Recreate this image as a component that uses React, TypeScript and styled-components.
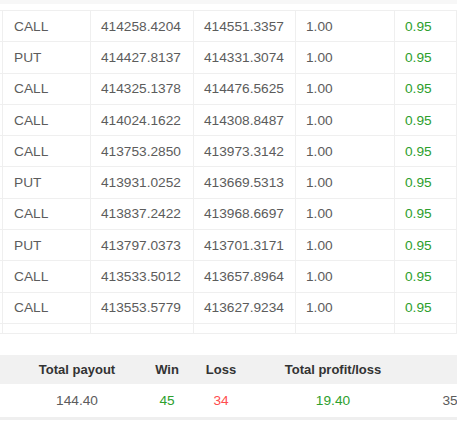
import React from "react";
import styled, { createGlobalStyle } from "styled-components";

const Global = createGlobalStyle`
  html, body { margin: 0; padding: 0; background: #fff; }
  body { overflow: hidden; width: 457px; height: 422px; font-family: "Liberation Sans", Arial, sans-serif; }
`;

const Page = styled.div`
  width: 457px;
  height: 422px;
  overflow: hidden;
  display: flex;
  flex-direction: column;
`;

const TopStrip = styled.div`
  height: 4px;
  background: #f7f7f7;
  margin-bottom: 6px;
  flex-shrink: 0;
`;

const Table = styled.div`
  display: flex;
  flex-direction: column;
  border-top: 1px solid #efefef;
  flex-shrink: 0;
`;

const Row = styled.div<{ $filler?: boolean }>`
  display: grid;
  grid-template-columns: 91px 103px 102px 99px 1fr;
  border-bottom: 1px solid #efefef;
  height: ${(p) => (p.$filler ? "9px" : "30.3px")};
  flex-shrink: 0;
`;

const Cell = styled.div<{ $green?: boolean; $first?: boolean }>`
  display: flex;
  align-items: center;
  padding-left: ${(p) => (p.$first ? "14px" : "10px")};
  border-right: 1px solid #efefef;
  box-shadow: ${(p) => (p.$first ? "inset 2px 0 0 #fff, inset 3px 0 0 #efefef" : "none")};
  font-size: 13.7px;
  color: ${(p) => (p.$green ? "#2ea02e" : "#5c5c5c")};
  white-space: nowrap;
  overflow: hidden;
`;

const Summary = styled.div`
  margin-top: 21px;
  display: flex;
  flex-direction: column;
  border-bottom: 3px solid #efefef;
  flex-shrink: 0;
`;

const SumRow = styled.div<{ $head?: boolean }>`
  display: grid;
  grid-template-columns: 14px 126px 54px 54px 170px 64px;
  height: ${(p) => (p.$head ? "29px" : "33px")};
  background: ${(p) => (p.$head ? "#f1f1f1" : "#fff")};
`;

const SumCell = styled.div<{ $head?: boolean; $tone?: "green" | "red" }>`
  display: flex;
  align-items: center;
  justify-content: center;
  white-space: nowrap;
  font-size: ${(p) => (p.$head ? "13px" : "13.7px")};
  font-weight: ${(p) => (p.$head ? 700 : 400)};
  color: ${(p) =>
    p.$head ? "#333" : p.$tone === "green" ? "#2ea02e" : p.$tone === "red" ? "#ff4d4f" : "#5c5c5c"};
`;

const rows: [string, string, string][] = [
  ["CALL", "414258.4204", "414551.3357"],
  ["PUT", "414427.8137", "414331.3074"],
  ["CALL", "414325.1378", "414476.5625"],
  ["CALL", "414024.1622", "414308.8487"],
  ["CALL", "413753.2850", "413973.3142"],
  ["PUT", "413931.0252", "413669.5313"],
  ["CALL", "413837.2422", "413968.6697"],
  ["PUT", "413797.0373", "413701.3171"],
  ["CALL", "413533.5012", "413657.8964"],
  ["CALL", "413553.5779", "413627.9234"],
];

export default function App() {
  return (
    <Page>
      <Global />
      <TopStrip />
      <Table>
        {rows.map((r, i) => (
          <Row key={i}>
            <Cell $first>{r[0]}</Cell>
            <Cell>{r[1]}</Cell>
            <Cell>{r[2]}</Cell>
            <Cell>1.00</Cell>
            <Cell $green>0.95</Cell>
          </Row>
        ))}
        <Row $filler>
          <Cell $first />
          <Cell />
          <Cell />
          <Cell />
          <Cell />
        </Row>
      </Table>
      <Summary>
        <SumRow $head>
          <SumCell $head />
          <SumCell $head>Total payout</SumCell>
          <SumCell $head>Win</SumCell>
          <SumCell $head>Loss</SumCell>
          <SumCell $head>Total profit/loss</SumCell>
          <SumCell $head />
        </SumRow>
        <SumRow>
          <SumCell />
          <SumCell>144.40</SumCell>
          <SumCell $tone="green">45</SumCell>
          <SumCell $tone="red">34</SumCell>
          <SumCell $tone="green">19.40</SumCell>
          <SumCell>35</SumCell>
        </SumRow>
      </Summary>
    </Page>
  );
}
